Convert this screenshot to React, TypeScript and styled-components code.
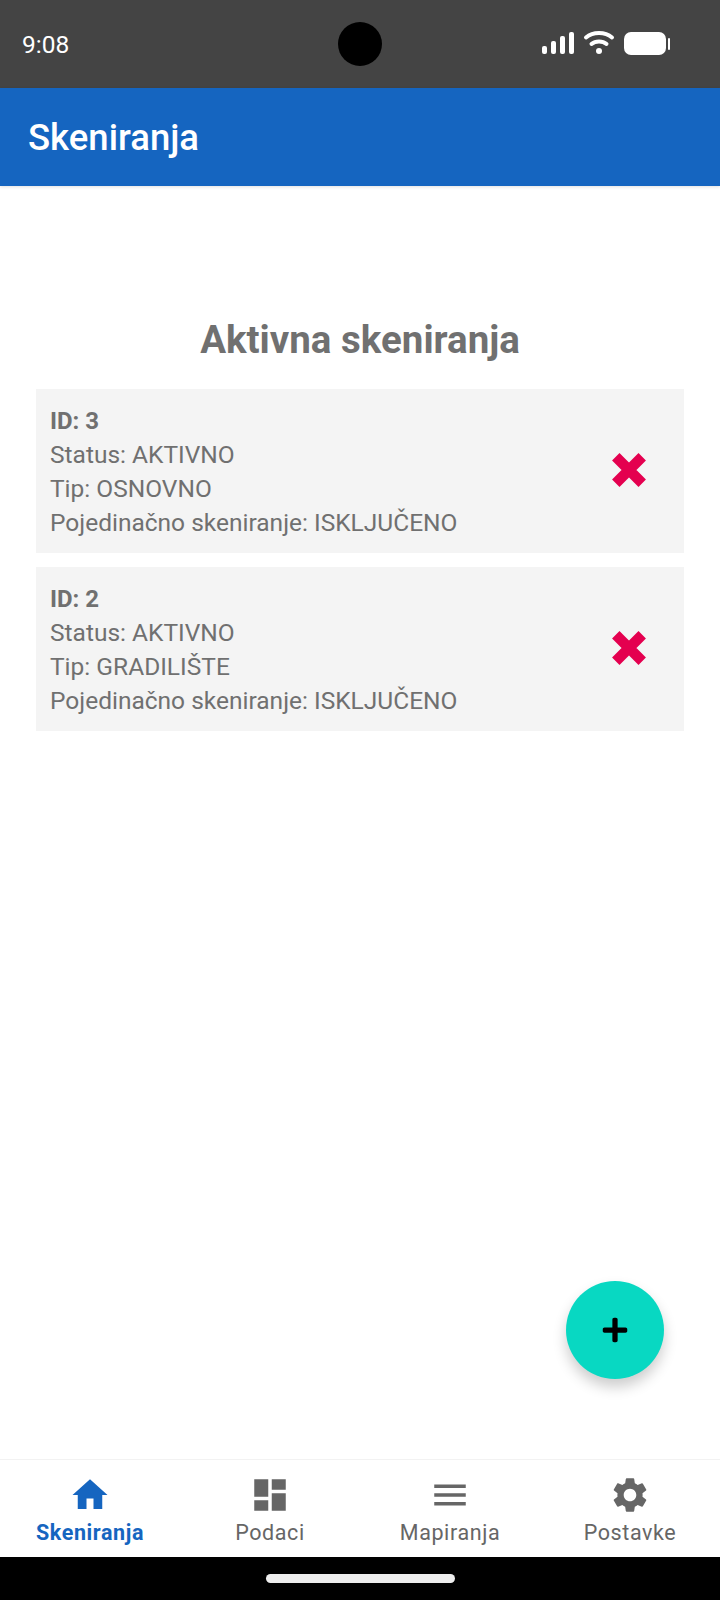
import React from "react";
import styled, { createGlobalStyle } from "styled-components";
import { FaPlus } from "react-icons/fa";
import { MdHome, MdDashboard, MdMenu, MdSettings } from "react-icons/md";

const scans = [
  { id: 3, status: "AKTIVNO", type: "OSNOVNO", single: "ISKLJUČENO" },
  { id: 2, status: "AKTIVNO", type: "GRADILIŠTE", single: "ISKLJUČENO" },
];

const tabs = [
  { label: "Skeniranja", Icon: MdHome, active: true },
  { label: "Podaci", Icon: MdDashboard, active: false },
  { label: "Mapiranja", Icon: MdMenu, active: false },
  { label: "Postavke", Icon: MdSettings, active: false },
];

function StatusIcons() {
  return (
    <svg width="130" height="26" viewBox="0 0 130 26">
      <g fill="#fff">
        <rect x="2" y="15" width="5" height="8" rx="2" />
        <rect x="11" y="10" width="5" height="13" rx="2" />
        <rect x="20" y="5" width="5" height="18" rx="2" />
        <rect x="29" y="1" width="5" height="22" rx="2" />
        <circle cx="59" cy="20" r="3" />
        <rect x="84" y="1" width="42" height="23" rx="7" />
        <rect x="128" y="7" width="2" height="12" rx="1" />
      </g>
      <g fill="none" stroke="#fff" strokeWidth="4" strokeLinecap="round">
        <path d="M46 6.5 C53 0.5 65 0.5 72 6.5" />
        <path d="M51.5 13 C55.5 9.5 62.5 9.5 66.5 13" />
      </g>
    </svg>
  );
}

function RemoveIcon() {
  return (
    <svg width="34" height="34" viewBox="0 0 34 34">
      <path
        d="M7.5 7.5 L26.5 26.5 M26.5 7.5 L7.5 26.5"
        fill="none"
        stroke="#e4004f"
        strokeWidth="10.5"
        strokeLinecap="square"
      />
    </svg>
  );
}

function App() {
  return (
    <>
      <GlobalStyle />
      <Page>
        <StatusBar>
          <Clock>9:08</Clock>
          <Camera />
          <StatusIconSlot>
            <StatusIcons />
          </StatusIconSlot>
        </StatusBar>

        <AppBar>
          <AppTitle>Skeniranja</AppTitle>
        </AppBar>

        <Main>
          <Heading>Aktivna skeniranja</Heading>
          <ScanList>
            {scans.map((scan) => (
              <ScanCard key={scan.id}>
                <ScanInfo>
                  <ScanId>ID: {scan.id}</ScanId>
                  <ScanLine>Status: {scan.status}</ScanLine>
                  <ScanLine>Tip: {scan.type}</ScanLine>
                  <ScanLine>Pojedinačno skeniranje: {scan.single}</ScanLine>
                </ScanInfo>
                <RemoveButton aria-label="Ukloni">
                  <RemoveIcon />
                </RemoveButton>
              </ScanCard>
            ))}
          </ScanList>
          <Fab aria-label="Dodaj">
            <FaPlus />
          </Fab>
        </Main>

        <BottomNav>
          {tabs.map(({ label, Icon, active }) => (
            <Tab key={label} $active={active}>
              <Icon />
              <TabLabel $active={active}>{label}</TabLabel>
            </Tab>
          ))}
        </BottomNav>

        <GestureBar>
          <GestureHandle />
        </GestureBar>
      </Page>
    </>
  );
}

//@ styled ////////////////////////////////////////
const GlobalStyle = createGlobalStyle`
  html, body {
    margin: 0;
    padding: 0;
    background: #fff;
  }

  body {
    font-family: Roboto, "Liberation Sans", sans-serif;
  }
`;

const Page = styled.div`
  width: 720px;
  height: 1600px;
  display: flex;
  flex-direction: column;
  overflow: hidden;
  background: #fff;
`;

const StatusBar = styled.div`
  height: 88px;
  flex: none;
  display: grid;
  grid-template-columns: 1fr 44px 1fr;
  align-items: center;
  padding: 0 22px;
  background: #444444;
`;

const Clock = styled.span`
  font-size: 24.5px;
  color: #fff;
`;

const Camera = styled.div`
  width: 44px;
  height: 44px;
  border-radius: 50%;
  background: #000;
`;

const StatusIconSlot = styled.div`
  display: flex;
  justify-content: flex-end;
  margin-right: 28px;
`;

const AppBar = styled.header`
  height: 98px;
  flex: none;
  display: flex;
  align-items: center;
  padding: 0 28px;
  background: #1565c0;
  box-shadow: 0 1px 3px rgba(0, 0, 0, 0.12);
`;

const AppTitle = styled.h1`
  margin: 0;
  font-size: 36.5px;
  font-weight: 500;
  color: #fff;
`;

const Main = styled.main`
  position: relative;
  flex: 1;
  padding: 132px 36px 0;
`;

const Heading = styled.h2`
  margin: 0 0 27px;
  font-size: 38.5px;
  line-height: 44px;
  font-weight: 700;
  text-align: center;
  color: #707070;
`;

const ScanList = styled.div`
  display: flex;
  flex-direction: column;
  gap: 14px;
`;

const ScanCard = styled.div`
  height: 164px;
  box-sizing: border-box;
  display: flex;
  align-items: center;
  justify-content: space-between;
  padding: 2px 38px 0 14px;
  background: #f4f4f4;
`;

const ScanInfo = styled.div`
  display: flex;
  flex-direction: column;
  font-size: 24.5px;
  line-height: 34px;
  color: #707070;
`;

const ScanId = styled.span`
  font-size: 24px;
  font-weight: 700;
`;

const ScanLine = styled.span`
  font-weight: 400;
`;

const RemoveButton = styled.button`
  display: flex;
  margin-bottom: 4px;
  padding: 0;
  border: 0;
  background: none;
`;

const Fab = styled.button`
  position: absolute;
  right: 56px;
  bottom: 80px;
  width: 98px;
  height: 98px;
  display: flex;
  align-items: center;
  justify-content: center;
  padding: 0;
  border: 0;
  border-radius: 50%;
  font-size: 28px;
  color: #000;
  background: #08d8c2;
  box-shadow: 0 8px 14px rgba(0, 0, 0, 0.2);
`;

const BottomNav = styled.nav`
  height: 98px;
  flex: none;
  box-sizing: border-box;
  display: grid;
  grid-template-columns: repeat(4, 1fr);
  border-top: 1px solid #f2f2f2;
  background: #fff;
`;

const Tab = styled.div<{ $active: boolean }>`
  display: flex;
  flex-direction: column;
  align-items: center;
  padding-top: 14px;
  font-size: 42px;
  color: ${({ $active }) => ($active ? "#1565c0" : "#666666")};
`;

const TabLabel = styled.span<{ $active: boolean }>`
  margin-top: 4px;
  font-size: 21.5px;
  line-height: 26px;
  letter-spacing: 0.6px;
  font-weight: ${({ $active }) => ($active ? 700 : 400)};
`;

const GestureBar = styled.div`
  height: 43px;
  flex: none;
  display: flex;
  align-items: center;
  justify-content: center;
  background: #000;
`;

const GestureHandle = styled.div`
  width: 189px;
  height: 9px;
  border-radius: 5px;
  background: #eeeeee;
`;

export default App;
